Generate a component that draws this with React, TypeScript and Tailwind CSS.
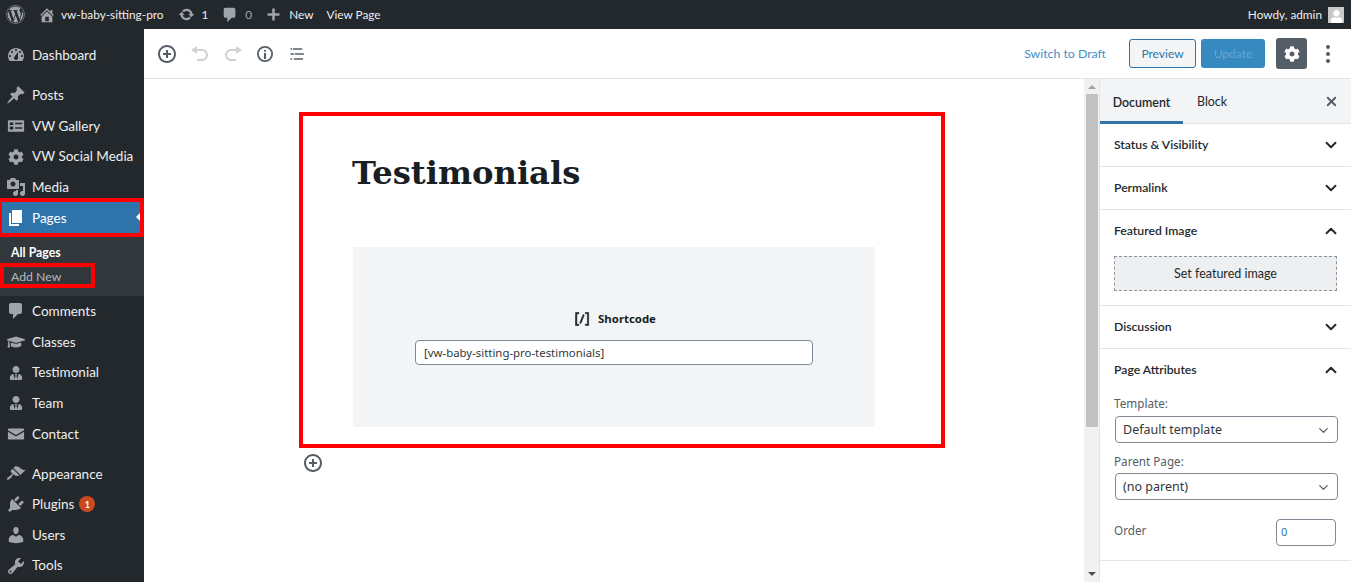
import React from "react";
import { FaWordpress, FaCog, FaGraduationCap, FaUserTie, FaUser } from "react-icons/fa";
import { ChevronDown, ChevronUp, X } from "lucide-react";

const ui = "font-['Lato','Noto_Sans',sans-serif]";

const Dash = ({ d, size = 20, cls = "" }: { d: string; size?: number; cls?: string }) => (
  <svg viewBox="0 0 20 20" width={size} height={size} fill="currentColor" className={cls}>
    <path d={d} fillRule="evenodd" />
  </svg>
);

const paths = {
  dashboard:
    "M3.760 16h12.480c1.100-1.370 1.760-3.110 1.760-5 0-4.420-3.580-8-8-8s-8 3.580-8 8c0 1.890.660 3.630 1.760 5zM10 4c.550 0 1 .450 1 1s-.450 1-1 1-1-.450-1-1 .450-1 1-1zM6 6c.550 0 1 .450 1 1s-.450 1-1 1-1-.450-1-1 .450-1 1-1zm8 0c.550 0 1 .450 1 1s-.450 1-1 1-1-.450-1-1 .450-1 1-1zm-5.370 5.550L12 7v6c0 1.100-.900 2-2 2s-2-.900-2-2c0-.570.240-1.080.630-1.450zM4 10c.550 0 1 .450 1 1s-.450 1-1 1-1-.450-1-1 .450-1 1-1zm12 0c.550 0 1 .450 1 1s-.450 1-1 1-1-.450-1-1 .450-1 1-1z",
  post:
    "M10.440 3.020l1.820-1.820 6.360 6.350-1.830 1.820c-1.050-.680-2.480-.570-3.410.360l-.750.750c-.920.930-1.040 2.350-.350 3.410l-1.830 1.820-2.410-2.410-2.800 2.790c-.420.420-3.380 2.710-3.800 2.290s1.860-3.390 2.280-3.810l2.790-2.790L4.100 9.360l1.830-1.820c1.050.690 2.480.570 3.400-.360l.750-.750c.930-.920 1.050-2.350.360-3.410z",
  gallery:
    "M2 3.500h16a1 1 0 0 1 1 1v11a1 1 0 0 1-1 1H2a1 1 0 0 1-1-1v-11a1 1 0 0 1 1-1zM3 6v3h4V6H3zm6 .5V8h8V6.500H9zM3 10.500V14h4v-3.500H3zm6 1V13h8v-1.500H9z",
  media:
    "M13 11V4c0-.550-.450-1-1-1h-1.670L9 1H5L3.670 3H2c-.550 0-1 .450-1 1v7c0 .550.450 1 1 1h10c.550 0 1-.450 1-1zM7 4.500c1.380 0 2.500 1.120 2.500 2.500S8.380 9.500 7 9.500 4.500 8.380 4.500 7 5.620 4.500 7 4.500zM14 6h5v10.500c0 1.380-1.120 2.500-2.500 2.500S14 17.880 14 16.500s1.120-2.500 2.500-2.500c.170 0 .340.020.500.050V9h-3V6zm-4 8.050V13h2v3.500c0 1.380-1.120 2.500-2.500 2.500S7 17.880 7 16.500 8.120 14 9.500 14c.170 0 .340.020.500.050z",
  page: "M6 15V2h10v13H6zm-1 1h8v2H3V5h2v11z",
  comment: "M5 2h9c1.100 0 2 .900 2 2v7c0 1.100-.900 2-2 2h-2l-5 5v-5H5c-1.100 0-2-.900-2-2V4c0-1.100.900-2 2-2z",
  mail: "M2 4h16a1 1 0 0 1 1 1v.8l-9 5.200-9-5.200V5a1 1 0 0 1 1-1zm-1 3.500l9 5.200 9-5.200V15a1 1 0 0 1-1 1H2a1 1 0 0 1-1-1V7.500z",
  appearance:
    "M14.480 11.060L7.410 3.990l1.500-1.500c.500-.560 2.300-.470 3.510.320 1.210.800 1.430 1.280 2.910 2.100 1.180.640 2.450 1.260 4.450.850zm-.710.710L6.700 4.700 4.930 6.470c-.390.390-.390 1.020 0 1.410l1.060 1.060c.390.390.390 1.030 0 1.420-.600.600-1.430 1.110-2.210 1.690-.350.260-.700.530-1.010.840C1.430 13.230.400 14.980 1.100 15.600c.540.610 2.360-.310 3.700-1.650.360-.310.780-.940 1.150-1.600.410-.710.800-1.430.990-1.560.390-.390 1.030-.390 1.420 0l1.060 1.060c.390.390 1.020.390 1.410 0z",
  plugin:
    "M13.110 4.360L9.870 7.600 8 5.730l3.240-3.240c.350-.340 1.050-.200 1.560.320.520.510.660 1.210.310 1.550zm-8 1.770l.910-1.120 9.010 9.010-1.190.840c-.710.710-2.630 1.160-3.820 1.160H6.140L4.900 17.260c-.590.590-1.540.590-2.120 0-.590-.580-.590-1.530 0-2.120l1.240-1.240v-3.880c0-1.130.400-3.190 1.090-3.890zm7.260 3.970l3.240-3.240c.340-.350 1.040-.210 1.550.310.520.510.660 1.210.310 1.550l-3.240 3.250z",
  users:
    "M10 9.250c-2.270 0-2.730-3.440-2.730-3.440C7 4.020 7.820 2 9.970 2c2.160 0 2.980 2.020 2.710 3.810 0 0-.410 3.440-2.680 3.440zm0 2.570L12.720 10c2.390 0 4.520 2.330 4.520 4.530v2.490s-3.650 1.130-7.240 1.130c-3.650 0-7.240-1.130-7.240-1.130v-2.490c0-2.250 1.940-4.480 4.470-4.480z",
  tools:
    "M16.680 9.770c-1.340 1.340-3.300 1.670-4.950.990l-5.410 6.520c-.990.990-2.590.990-3.580 0s-.990-2.590 0-3.570l6.520-5.420c-.680-1.650-.350-3.610.990-4.950 1.280-1.280 3.120-1.620 4.720-1.060l-2.890 2.890 2.820 2.820 2.860-2.870c.530 1.580.180 3.390-1.080 4.650zM3.810 16.210c.400.390 1.040.390 1.430 0 .400-.400.400-1.040 0-1.430-.390-.400-1.030-.400-1.430 0-.390.390-.390 1.030 0 1.430z",
  home:
    "M16 8.500l1.530 1.530-1.060 1.060L10 4.620l-6.470 6.470-1.060-1.060L10 2.500l4 4v-2h2v4zm-6-2.460l6 5.990V18H4v-5.970zM12 17v-5H8v5h4z",
  update:
    "M10.200 3.280c3.530 0 6.430 2.610 6.920 6h2.080l-3.500 4-3.500-4h2.320c-.450-1.970-2.210-3.450-4.320-3.450-1.450 0-2.730.710-3.540 1.780L4.950 5.660C6.230 4.200 8.110 3.280 10.200 3.280zm-.400 13.440c-3.520 0-6.430-2.610-6.920-6H.800l3.500-4c1.170 1.330 2.330 2.670 3.500 4H5.480c.450 1.970 2.210 3.450 4.320 3.450 1.450 0 2.730-.710 3.540-1.780l1.710 1.950c-1.280 1.460-3.150 2.380-5.250 2.380z",
  plus: "M17 8.500v3h-5.500V17h-3v-5.500H3v-3h5.500V3h3v5.500H17z",
};

type Item = { label: string; icon: React.ReactNode; badge?: string };

const group1: Item[] = [{ label: "Dashboard", icon: <Dash d={paths.dashboard} /> }];
const group2: Item[] = [
  { label: "Posts", icon: <Dash d={paths.post} /> },
  { label: "VW Gallery", icon: <Dash d={paths.gallery} size={18} /> },
  { label: "VW Social Media", icon: <FaCog size={16} /> },
  { label: "Media", icon: <Dash d={paths.media} /> },
];
const group3: Item[] = [
  { label: "Comments", icon: <Dash d={paths.comment} /> },
  { label: "Classes", icon: <FaGraduationCap size={18} /> },
  { label: "Testimonial", icon: <FaUserTie size={14} /> },
  { label: "Team", icon: <FaUserTie size={14} /> },
  { label: "Contact", icon: <Dash d={paths.mail} size={18} /> },
];
const group4: Item[] = [
  { label: "Appearance", icon: <Dash d={paths.appearance} /> },
  { label: "Plugins", icon: <Dash d={paths.plugin} />, badge: "1" },
  { label: "Users", icon: <Dash d={paths.users} /> },
  { label: "Tools", icon: <Dash d={paths.tools} /> },
];

const MenuRow = ({ item }: { item: Item }) => (
  <div className="h-[30.6px] flex items-center text-[13.5px] text-[#eeeeee]">
    <span className="w-[32px] shrink-0 flex justify-center text-[#a0a5aa]">{item.icon}</span>
    <span>{item.label}</span>
    {item.badge && (
      <span className="ml-[5px] w-[16px] h-[16px] rounded-full bg-[#ca4a1f] text-white text-[9px] font-bold flex items-center justify-center">
        {item.badge}
      </span>
    )}
  </div>
);

const TopBar = () => (
  <div className="h-[29px] shrink-0 bg-[#23282d] flex items-center text-[11.8px] text-[#eeeeee]">
    <span className="w-[31px] flex justify-center text-[#a0a5aa]"><FaWordpress size={19} /></span>
    <span className="ml-[7px] text-[#a0a5aa]"><Dash d={paths.home} size={18} /></span>
    <span className="ml-[5px]">vw-baby-sitting-pro</span>
    <span className="ml-[14px] text-[#a0a5aa]"><Dash d={paths.update} size={17} /></span>
    <span className="ml-[7px]">1</span>
    <span className="ml-[13px] text-[#a0a5aa]"><Dash d={paths.comment} size={18} /></span>
    <span className="ml-[6px] text-[#a0a5aa]">0</span>
    <span className="ml-[13px] text-[#a0a5aa]"><Dash d={paths.plus} size={17} /></span>
    <span className="ml-[7px]">New</span>
    <span className="ml-[13px]">View Page</span>
    <span className="ml-auto">Howdy, admin</span>
    <span className="ml-[6px] mr-[7px] w-[16px] h-[16px] bg-[#c8c8c8] text-white flex items-end justify-center overflow-hidden">
      <FaUser size={13} />
    </span>
  </div>
);

const Sidebar = () => (
  <aside className="w-[144px] shrink-0 bg-[#23282d] pt-[11px] overflow-hidden">
    {group1.map((i) => <MenuRow key={i.label} item={i} />)}
    <div className="h-[9.5px]" />
    {group2.map((i) => <MenuRow key={i.label} item={i} />)}
    <div className="relative h-[30.6px] bg-[#2e74ab] flex items-center text-[13.5px] text-white">
      <span className="w-[32px] shrink-0 flex justify-center text-white"><Dash d={paths.page} /></span>
      <span>Pages</span>
      <span className="absolute right-[4px] top-[11px] border-y-[4px] border-y-transparent border-r-[4px] border-r-white" />
      <span className="absolute inset-x-0 -top-[4px] -bottom-[4px] border-y-[4px] border-l-[2px] border-r-[4px] border-[#ff0000]" />
    </div>
    <div className="h-[63px] bg-[#32373c] pt-[8px] text-[12.3px]">
      <div className="h-[22px] pl-[11px] pt-[2px] flex items-center font-bold text-white">All Pages</div>
      <div className="w-[95px] h-[25px] pl-[7px] pt-[3px] flex items-center border-[4px] border-[#ff0000] text-[#b4b9be]">Add New</div>
    </div>
    {group3.map((i) => <MenuRow key={i.label} item={i} />)}
    <div className="h-[9.5px]" />
    {group4.map((i) => <MenuRow key={i.label} item={i} />)}
  </aside>
);

const TB = ({ d, box = 20, cls, size = 20 }: { d: string; box?: number; cls: string; size?: number }) => (
  <svg viewBox={`0 0 ${box} ${box}`} width={size} height={size} fill="currentColor" className={cls}>
    <path d={d} />
  </svg>
);

const insertIcon =
  "M10 1c-5 0-9 4-9 9s4 9 9 9 9-4 9-9-4-9-9-9zm0 16c-3.900 0-7-3.100-7-7s3.100-7 7-7 7 3.100 7 7-3.100 7-7 7zm1-11H9v3H6v2h3v3h2v-3h3V9h-3V6z";

const Toolbar = () => (
  <div className={`h-[50px] shrink-0 bg-white border-b border-[#e2e4e7] flex items-center pl-[13px] pr-[21px] ${ui}`}>
    <TB cls="text-[#555d66]" d={insertIcon} />
    <TB cls="ml-[13px] text-[#cfd1d4]" d="M12 5H7V2L1 6l6 4V7h5c2.200 0 4 1.800 4 4s-1.800 4-4 4H7v2h5c3.300 0 6-2.700 6-6s-2.700-6-6-6z" />
    <TB cls="ml-[13px] text-[#cfd1d4]" d="M8 5h5V2l6 4-6 4V7H8c-2.200 0-4 1.800-4 4s1.800 4 4 4h5v2H8c-3.300 0-6-2.700-6-6s2.700-6 6-6z" />
    <TB cls="ml-[12px] text-[#555d66]" d="M10 2a8 8 0 1 1 0 16 8 8 0 0 1 0-16zm0 1.800a6.200 6.200 0 1 0 0 12.400 6.200 6.200 0 0 0 0-12.400zM9 9h2v6H9V9zm1-3.300a1.100 1.100 0 1 1 0 2.200 1.100 1.100 0 0 1 0-2.200z" />
    <TB box={24} cls="ml-[13px] text-[#555d66]" d="M5 5H3v2h2V5zm3 8h11v-2H8v2zm9-8H6v2h11V5zM7 11H3v2h4v-2zm0 8h11v-2H7v2zm-2-2H3v2h2v-2z" />
    <span className="ml-auto pt-[1px] text-[12.3px] text-[#3e8fc9]">Switch to Draft</span>
    <span className="ml-[23px] w-[67px] h-[29px] rounded-[3px] border border-[#2e74ab] bg-[#f3f5f6] text-[#2e74ab] text-[12px] flex items-center justify-center">Preview</span>
    <span className="ml-[5px] w-[64px] h-[29px] rounded-[3px] bg-[#368ac0] text-[#66a6d3] text-[12px] flex items-center justify-center">Update</span>
    <span className="ml-[11px] w-[31px] h-[31px] rounded-[3px] bg-[#555d66] text-white flex items-center justify-center">
      <FaCog size={16} />
    </span>
    <span className="ml-[19px] w-[4px] flex flex-col gap-[3px]">
      <span className="w-[4px] h-[4px] rounded-full bg-[#555d66]" />
      <span className="w-[4px] h-[4px] rounded-full bg-[#555d66]" />
      <span className="w-[4px] h-[4px] rounded-full bg-[#555d66]" />
    </span>
  </div>
);

const Editor = () => (
  <main className="flex-1 min-w-0 bg-white pt-[33px] pl-[155px] relative">
    <section className="w-[646px] h-[336px] border-[4px] border-[#ff0000] pt-[34px] pl-[49px]">
      <h1 className="font-['DejaVu_Serif',serif] font-bold text-[32.2px] leading-[46px] text-[#191e23]">Testimonials</h1>
      <div className="mt-[51px] ml-[1px] w-[522px] h-[180px] bg-[#f3f4f5] flex flex-col items-center pt-[62px]">
        <div className="flex items-center text-[11.4px] font-bold text-[#191e23] font-['Noto_Sans',sans-serif]">
          <svg viewBox="0 0 24 24" width="20" height="20" fill="currentColor" stroke="currentColor" strokeWidth="0.7" className="text-[#191e23]">
            <path d="M16 4.200v1.500h2.500v12.500H16v1.500h4V4.200h-4zM4.200 19.800h4v-1.500H5.800V5.800h2.500V4.200h-4l-.1 15.600zm5.100-3.100l1.400.6 4-10-1.400-.6-4 10z" />
          </svg>
          <span className="ml-[6px]">Shortcode</span>
        </div>
        <div className="mt-[11px] w-[398px] h-[25px] rounded-[4px] border border-[#7e8993] bg-white pl-[8px] pt-[1px] flex items-center text-[11.4px] text-[#32373c] font-['Noto_Sans',sans-serif]">
          [vw-baby-sitting-pro-testimonials]
        </div>
      </div>
    </section>
    <div className="mt-[5px] ml-[4px]">
      <TB cls="text-[#555d66]" d={insertIcon} />
    </div>
  </main>
);

const Scrollbar = () => (
  <div className="w-[15px] shrink-0 bg-[#f1f1f1] flex flex-col items-center">
    <span className="mt-[6px] border-x-[4px] border-x-transparent border-b-[4px] border-b-[#a3a3a3]" />
    <div className="mt-[5px] w-[12px] h-[333px] bg-[#c1c1c1]" />
    <span className="mt-auto mb-[6px] border-x-[4px] border-x-transparent border-t-[4px] border-t-[#505050]" />
  </div>
);

const PanelHead = ({ title, open }: { title: string; open?: boolean }) => (
  <div className="flex items-center justify-between text-[12.2px] font-semibold text-[#23282d] h-[42px] pl-[14px] pr-[11px]">
    <span className="pt-[1px]">{title}</span>
    {open ? <ChevronUp size={18} strokeWidth={2.5} /> : <ChevronDown size={18} strokeWidth={2.5} />}
  </div>
);

const selectCls =
  "ml-[15px] mr-[13px] h-[27px] rounded-[4px] border border-[#7e8993] pl-[7px] pr-[6px] pt-[1px] flex items-center justify-between text-[12.5px] text-[#32373c] font-['Noto_Sans',sans-serif]";

const labelCls = "pl-[14px] text-[11.7px] text-[#555d66] leading-[16px] font-['Noto_Sans',sans-serif]";

const SidePanel = () => (
  <aside className={`w-[252px] shrink-0 bg-white border-l border-[#e2e4e7] ${ui}`}>
    <div className="h-[45px] bg-[#f3f4f5] border-b border-[#e2e4e7] flex items-stretch text-[12.4px] text-[#23282d]">
      <span className="w-[83px] pt-[6px] flex items-center justify-center font-semibold border-b-[3px] border-[#2e74ab] -mb-[1px]">Document</span>
      <span className="ml-[14px] pt-[3px] flex items-center">Block</span>
      <X size={15} strokeWidth={3} className="ml-auto mr-[12px] self-center text-[#555d66]" />
    </div>
    <div className="border-b border-[#e2e4e7]"><PanelHead title="Status & Visibility" /></div>
    <div className="border-b border-[#e2e4e7]"><PanelHead title="Permalink" /></div>
    <div className="border-b border-[#e2e4e7] h-[96px]">
      <PanelHead title="Featured Image" open />
      <div className="mt-[4px] ml-[14px] mr-[14px] h-[35px] pt-[1px] border border-dashed border-[#8d96a0] bg-[#edeff0] text-[12.5px] text-[#23282d] flex items-center justify-center">
        Set featured image
      </div>
    </div>
    <div className="border-b border-[#e2e4e7]"><PanelHead title="Discussion" /></div>
    <div className="border-b border-[#e2e4e7] h-[212px]">
      <PanelHead title="Page Attributes" open />
      <div className={`${labelCls} mt-[4px]`}>Template:</div>
      <div className={`${selectCls} mt-[5px]`}>
        <span>Default template</span>
        <ChevronDown size={15} className="text-[#555d66]" />
      </div>
      <div className={`${labelCls} mt-[10px]`}>Parent Page:</div>
      <div className={`${selectCls} mt-[4px]`}>
        <span>(no parent)</span>
        <ChevronDown size={15} className="text-[#555d66]" />
      </div>
      <div className="mt-[19px] pl-[14px] pr-[15px] flex items-center justify-between text-[11.7px] text-[#555d66] font-['Noto_Sans',sans-serif]">
        <span className="-mt-[4px]">Order</span>
        <span className="w-[60px] h-[27px] rounded-[4px] border border-[#7e8993] pl-[4px] flex items-center text-[#2e74ab] text-[11px]">0</span>
      </div>
    </div>
  </aside>
);

export default function App() {
  return (
    <div className={`w-[1351px] h-[582px] overflow-hidden flex flex-col ${ui}`}>
      <TopBar />
      <div className="flex flex-1 min-h-0">
        <Sidebar />
        <div className="flex-1 min-w-0 flex flex-col">
          <Toolbar />
          <div className="flex flex-1 min-h-0">
            <Editor />
            <Scrollbar />
            <SidePanel />
          </div>
        </div>
      </div>
    </div>
  );
}
